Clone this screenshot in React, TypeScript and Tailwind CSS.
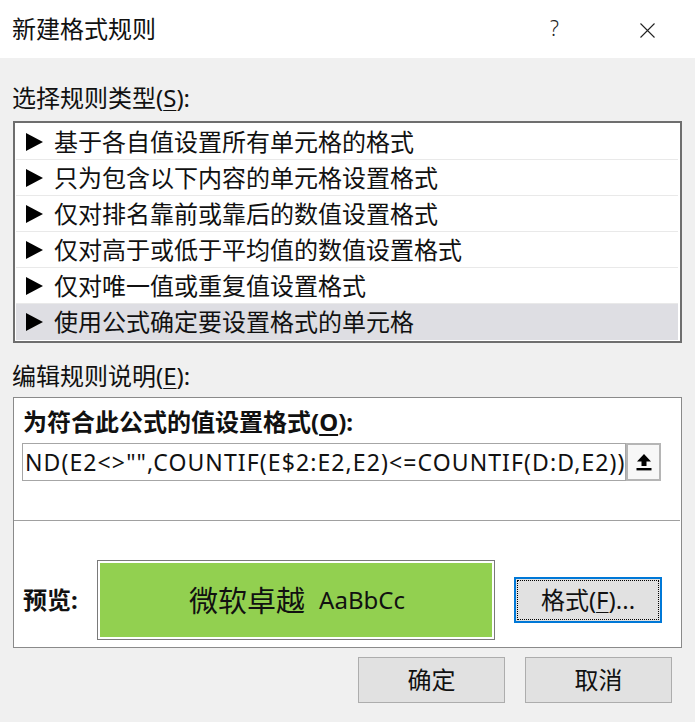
import React from 'react'

const rules = [
  '基于各自值设置所有单元格的格式',
  '只为包含以下内容的单元格设置格式',
  '仅对排名靠前或靠后的数值设置格式',
  '仅对高于或低于平均值的数值设置格式',
  '仅对唯一值或重复值设置格式',
  '使用公式确定要设置格式的单元格',
]

const font = "font-['Noto_Sans','Noto_Sans_CJK_SC',sans-serif]"

export default function App() {
  const selected = 5
  return (
    <div className={`w-[695px] h-[722px] bg-[#f0f0f0] text-[#111] ${font} overflow-hidden`}>
      {/* Title bar */}
      <div className="h-[58px] bg-white flex items-center pl-[12px] relative">
        <span className="text-[24px] leading-none">新建格式规则</span>
        <span className="absolute left-[550px] top-[18px] text-[21px] leading-none text-[#222] font-light">?</span>
        <svg className="absolute left-[640px] top-[23px]" width="15" height="15" viewBox="0 0 15 15">
          <path d="M0.5 0.5 L14.5 14.5 M14.5 0.5 L0.5 14.5" stroke="#222" strokeWidth="1.1" fill="none" />
        </svg>
      </div>

      {/* Rule type */}
      <div className="mt-[23px] h-[34px] pl-[12px] flex items-center text-[24px] leading-none">
        选择规则类型(<span className="underline underline-offset-[3px] decoration-1">S</span>):
      </div>
      <div className="mt-[6px] ml-[13px] w-[669px] h-[222px] border-2 border-[#6e6e6e] bg-white p-[1px] pr-[2px] flex flex-col">
        {rules.map((r, i) => (
          <div
            key={r}
            className={`h-[36px] shrink-0 flex items-center pl-[10px] text-[24px] leading-none ${
              i === selected ? 'bg-[#dedee3]' : ''
            } ${i < rules.length - 1 ? 'border-b border-[#e9e9e9]' : ''}`}
          >
            <svg width="17" height="18" viewBox="0 0 17 18" className="shrink-0">
              <path d="M0 0 L17 9 L0 18 Z" fill="#000" />
            </svg>
            <span className="ml-[11px]">{r}</span>
          </div>
        ))}
      </div>

      {/* Edit description */}
      <div className="mt-[16px] h-[34px] pl-[12px] flex items-center text-[24px] leading-none">
        编辑规则说明(<span className="underline underline-offset-[3px] decoration-1">E</span>):
      </div>
      <div className="mt-[4px] ml-[13px] w-[669px] h-[251px] border border-[#8a8a8a] bg-white flex flex-col">
        <div className="mt-[7px] h-[34px] pl-[9px] flex items-center text-[24px] font-bold leading-none">
          为符合此公式的值设置格式(<span className="underline underline-offset-[3px] decoration-2">O</span>):
        </div>
        <div className="mt-[4px] ml-[8px] flex h-[38px]">
          <div className="w-[604px] h-full border border-[#a6a6a6] bg-white overflow-hidden flex items-center pl-[2px]">
            <span className="whitespace-nowrap text-[23px] leading-none tracking-[1.1px]">
              ND(E2&lt;&gt;"",COUNTIF(E$2:E2,E2)&lt;=COUNTIF(D:D,E2))
            </span>
          </div>
          <div className="w-[35px] h-full border-2 border-[#b5b5b5] bg-[#f7f7f7] flex items-center justify-center">
            <svg width="16" height="18" viewBox="0 0 16 18">
              <path d="M8 1 L15 8.5 L10.5 8.5 L10.5 13 L5.5 13 L5.5 8.5 L1 8.5 Z" fill="#000" />
              <rect x="0.5" y="15" width="15" height="2.4" fill="#000" />
            </svg>
          </div>
        </div>
        <div className="mt-[39px] h-px bg-[#a0a0a0] mr-[1px]" />
        <div className="mt-[39px] flex items-start">
          <div className="w-[83px] pl-[9px] h-[80px] flex items-center text-[24px] font-bold leading-none">
            预览:
          </div>
          <div className="w-[398px] h-[80px] border border-[#7a7a7a] p-[2px] bg-white">
            <div className="w-full h-full bg-[#92d050] flex items-center justify-center gap-[14px] pl-[2px]">
              <span className="text-[29px] leading-none">微软卓越</span>
              <span className="text-[24px] leading-none">AaBbCc</span>
            </div>
          </div>
          <div className="ml-[19px] mt-[17px] w-[148px] h-[46px] border-2 border-[#0078d7] p-[1px] bg-[#e1e1e1]">
            <div className="w-full h-full border border-dotted border-black flex items-center justify-center text-[24px] leading-none">
              格式(<span className="underline underline-offset-[3px] decoration-1">F</span>)...
            </div>
          </div>
        </div>
      </div>

      {/* Buttons */}
      <div className="mt-[9px] flex pl-[358px] gap-[20px]">
        <button className="w-[147px] h-[46px] bg-[#e1e1e1] border border-[#adadad] text-[24px] leading-none">确定</button>
        <button className="w-[147px] h-[46px] bg-[#e1e1e1] border border-[#adadad] text-[24px] leading-none">取消</button>
      </div>
    </div>
  )
}
